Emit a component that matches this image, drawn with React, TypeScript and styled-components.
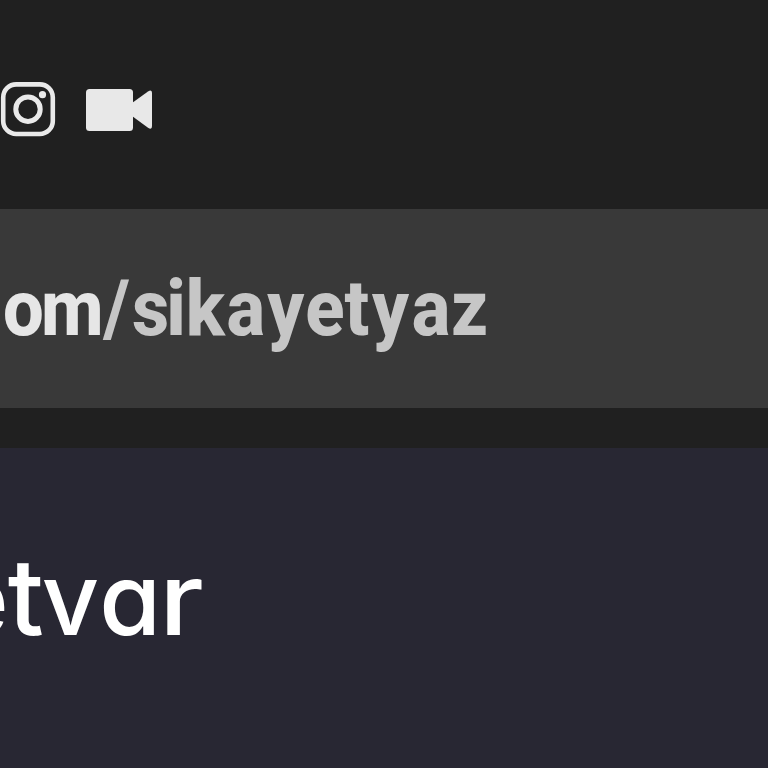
import React from 'react';

import styled, { createGlobalStyle } from 'styled-components';

interface Letter {
  char: string;
  gap?: number;
  size?: string;
  weight?: number;
  stretch?: number;
}

const domain: Letter[] = [{ char: 'o', gap: -3 }, { char: 'm' }];

const path: Letter[] = [
  { char: '/', gap: 2.5 },
  { char: 's', gap: -3 },
  { char: 'i' },
  { char: 'k', gap: 1.5 },
  { char: 'a', gap: 2.5 },
  { char: 'y', gap: 1 },
  { char: 'e' },
  { char: 't', gap: 3 },
  { char: 'y', gap: 3 },
  { char: 'a', gap: 0.5 },
  { char: 'z' },
];

const brand: Letter[] = [
  { char: 'e', gap: -1 },
  { char: 't', gap: -2, size: '1.06em', weight: 490 },
  { char: 'v', gap: 0 },
  { char: 'a', gap: -2 },
  { char: 'r', weight: 460, stretch: 1.16 },
];

const InstagramIcon = () => (
  <svg width="56" height="56" viewBox="0 0 56 56" fill="none">
    <rect x="3.2" y="2.4" width="49.6" height="49.6" rx="13" stroke="#e9e9e9" strokeWidth="4.6" />
    <circle cx="28" cy="27.2" r="12.2" stroke="#e9e9e9" strokeWidth="5" />
    <circle cx="42.5" cy="12.7" r="3.6" fill="#e9e9e9" />
  </svg>
);

const VideoIcon = () => (
  <svg width="66" height="42" viewBox="0 0 66 42" fill="#e8e8e8">
    <rect width="47" height="42" rx="3.5" />
    <path d="M46 14 62 2.5Q66 -.2 66 4V37Q66 41.5 62 38.7L46 27Z" />
  </svg>
);

const renderLetters = (letters: Letter[]) =>
  letters.map((v, i) => (
    <Glyph key={i} $gap={v.gap ?? 0} $size={v.size} $weight={v.weight} $stretch={v.stretch}>
      {v.char}
    </Glyph>
  ));

const App: React.FC = () => {
  return (
    <Wrapper>
      <GlobalStyle />
      <StatusBar>
        <InstagramIcon />
        <VideoIcon />
      </StatusBar>
      <AddressBar>
        <Address>
          <Domain>{renderLetters(domain)}</Domain>
          {renderLetters(path)}
        </Address>
      </AddressBar>
      <Divider />
      <Header>
        <Brand>{renderLetters(brand)}</Brand>
      </Header>
    </Wrapper>
  );
};

export default App;

const GlobalStyle = createGlobalStyle`
  body {
    margin: 0;
    background: #202020;
  }
`;

const Wrapper = styled.div`
  width: 768px;
  height: 768px;
  display: flex;
  flex-direction: column;
  overflow: hidden;
`;

const StatusBar = styled.div`
  height: 209px;
  box-sizing: border-box;
  padding-top: 10px;
  display: flex;
  align-items: center;
  gap: 30px;
  flex-shrink: 0;
  & svg {
    display: block;
    flex-shrink: 0;
  }
`;

const AddressBar = styled.div`
  height: 199px;
  display: flex;
  align-items: center;
  flex-shrink: 0;
  background: #393939;
`;

const Address = styled.div`
  margin-left: 3px;
  font-family: Roboto, sans-serif;
  font-size: 77px;
  font-weight: 800;
  line-height: 90px;
  white-space: nowrap;
  color: #c6c6c6;
  transform: scaleX(0.94);
  transform-origin: left;
`;

const Domain = styled.span`
  color: #e6e6e6;
`;

const Glyph = styled.span<{ $gap: number; $size?: string; $weight?: number; $stretch?: number }>`
  letter-spacing: ${({ $gap }) => $gap}px;
  font-size: ${({ $size }) => $size ?? 'inherit'};
  font-weight: ${({ $weight }) => $weight ?? 'inherit'};
  ${({ $stretch }) =>
    $stretch && `display: inline-block; transform: scaleX(${$stretch}); transform-origin: left;`}
`;

const Divider = styled.div`
  height: 40px;
  flex-shrink: 0;
  background: #202020;
`;

const Header = styled.header`
  flex: 1;
  display: flex;
  align-items: center;
  box-sizing: border-box;
  padding-bottom: 20px;
  background: #282733;
`;

const Brand = styled.div`
  margin-left: -50px;
  font-family: Inter, sans-serif;
  font-size: 100px;
  font-weight: 500;
  font-feature-settings: 'cv11' 1, 'ss03' 1;
  line-height: 120px;
  white-space: nowrap;
  color: #fff;
`;
